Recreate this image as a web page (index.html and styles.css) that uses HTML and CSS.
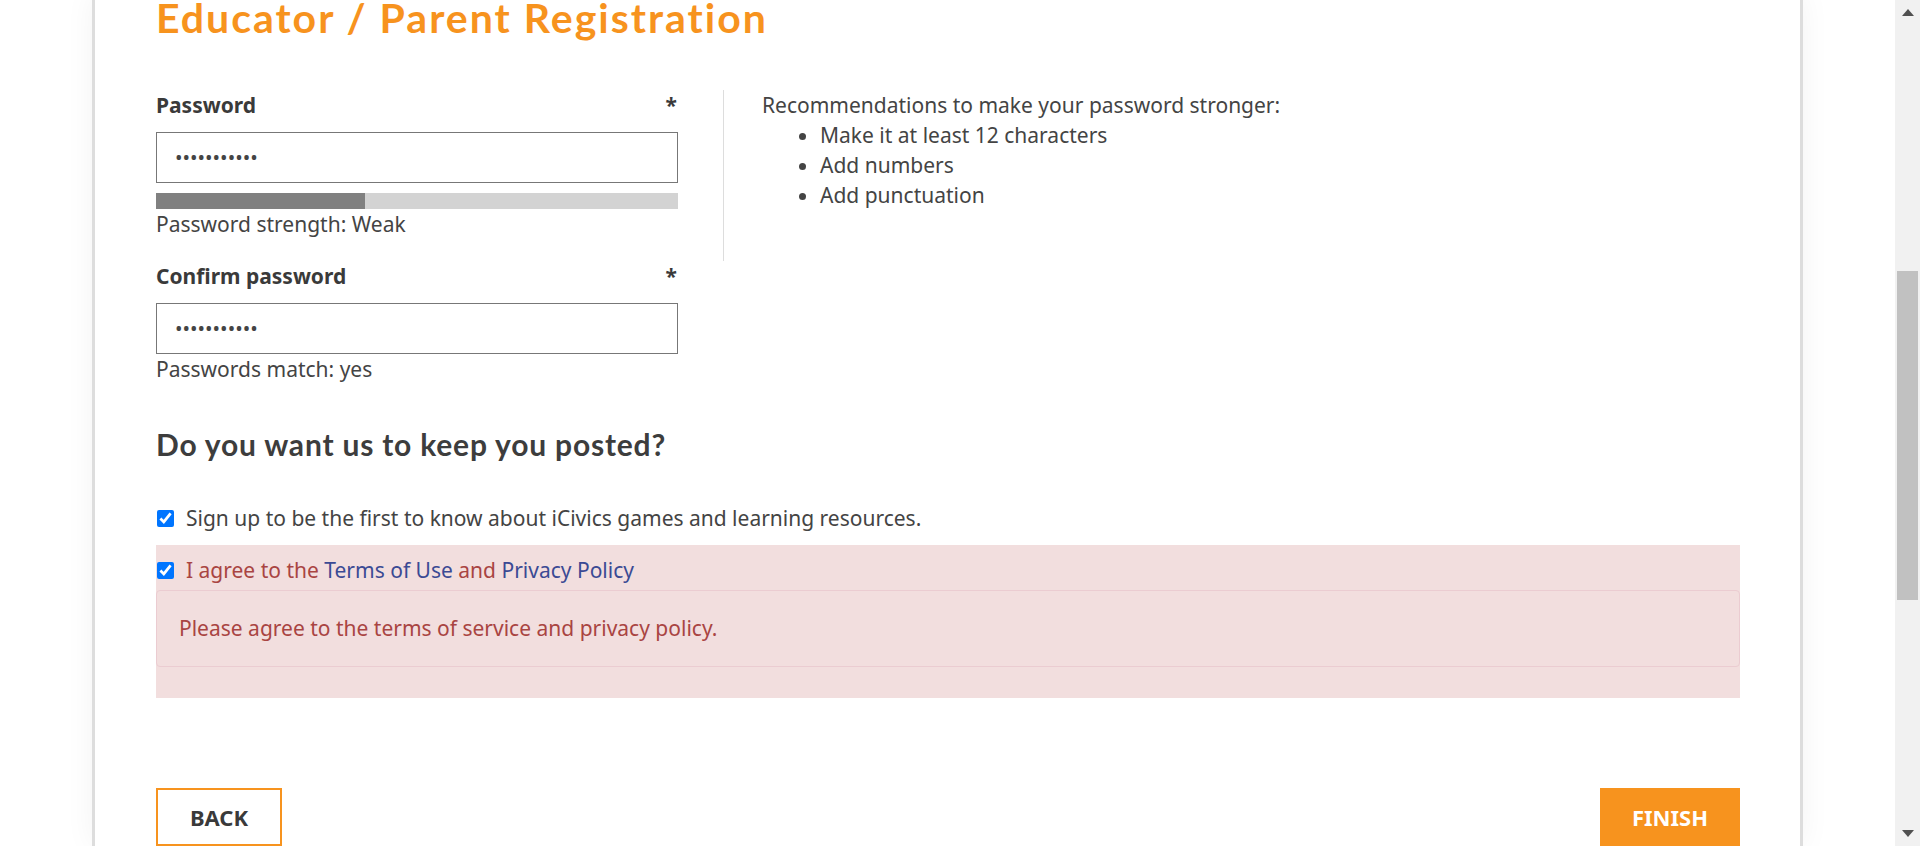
FILE: index.html
```html
<!DOCTYPE html>
<html lang="en">
<head>
<meta charset="utf-8">
<title>Educator / Parent Registration</title>
<link rel="stylesheet" href="styles.css">
</head>
<body>
<div class="viewport">
  <div class="page">
    <main class="card">
      <h1 class="page-title">Educator / Parent Registration</h1>

      <div class="pw-row">
        <div class="pw-col">
          <div class="field-label"><span>Password</span><span class="req">*</span></div>
          <input class="text-input" type="password" value="abcdefghijk" readonly>
          <div class="strength-bar"><div class="strength-fill" style="width:40%"></div></div>
          <div class="help">Password strength: Weak</div>
        </div>
        <div class="pw-tips">
          <div>Recommendations to make your password stronger:</div>
          <ul class="tips-list">
            <li>Make it at least 12 characters</li>
            <li>Add numbers</li>
            <li>Add punctuation</li>
          </ul>
        </div>
      </div>

      <div class="confirm-field">
        <div class="field-label"><span>Confirm password</span><span class="req">*</span></div>
        <input class="text-input" type="password" value="abcdefghijk" readonly>
        <div class="help">Passwords match: yes</div>
      </div>

      <h2 class="section-title">Do you want us to keep you posted?</h2>

      <label class="check-row">
        <input type="checkbox" checked>
        <span>Sign up to be the first to know about iCivics games and learning resources.</span>
      </label>

      <div class="error-item">
        <label class="check-row agree">
          <input type="checkbox" checked>
          <span>I agree to the <a href="#">Terms of Use</a> and <a href="#">Privacy Policy</a></span>
        </label>
        <div class="alert">Please agree to the terms of service and privacy policy.</div>
      </div>

      <div class="actions">
        <button class="btn btn-back" type="button">BACK</button>
        <button class="btn btn-finish" type="button">FINISH</button>
      </div>
    </main>
  </div>
  <div class="scrollbar">
    <div class="sb-arrow">
      <svg width="12" height="7" viewBox="0 0 12 7"><polygon points="6,0 12,7 0,7" fill="#505050"/></svg>
    </div>
    <div class="sb-thumb"></div>
    <div class="sb-arrow sb-down">
      <svg width="12" height="7" viewBox="0 0 12 7"><polygon points="0,0 12,0 6,7" fill="#505050"/></svg>
    </div>
  </div>
</div>
</body>
</html>
```

FILE: styles.css
```css
html, body {
  margin: 0;
  padding: 0;
}

body {
  font-family: "Noto Sans", "Open Sans", sans-serif;
  color: #444;
  background: #fff;
  overflow: hidden;
}

.viewport {
  display: flex;
  height: 846px;
  overflow: hidden;
}

.page {
  flex: 1;
  min-width: 0;
}

.card {
  margin-left: 92px;
  width: 1711px;
  min-height: 846px;
  box-sizing: border-box;
  border-left: 3px solid #ddd;
  border-right: 3px solid #ddd;
  padding: 0 60px 0 61px;
  background: #fff;
  box-shadow: 0 0 28px rgba(0, 0, 0, 0.05);
}

.page-title {
  font-family: "Lato", "Noto Sans", sans-serif;
  font-weight: 700;
  font-size: 41px;
  line-height: 48px;
  letter-spacing: 2px;
  color: #f7931e;
  margin: -6px 0 48px;
}

.pw-row {
  display: flex;
}

.pw-col {
  width: 522px;
  margin-right: 45px;
  padding-bottom: 22px;
}

.field-label {
  display: flex;
  justify-content: space-between;
  font-weight: 700;
  font-size: 21px;
  line-height: 30px;
  color: #3a3a3a;
}

.req {
  margin-right: 1px;
}

.text-input {
  display: block;
  width: 522px;
  height: 51px;
  box-sizing: border-box;
  margin: 12px 0 0;
  border: 1px solid #777;
  border-radius: 0;
  padding: 0 18px;
  font-family: "Noto Sans", sans-serif;
  font-size: 20px;
  color: #444;
  background: #fff;
  outline: none;
}

.strength-bar {
  margin-top: 10px;
  height: 16px;
  background: #d3d3d3;
}

.strength-fill {
  height: 100%;
  background: #808080;
}

.help {
  font-size: 21px;
  line-height: 30px;
}

.confirm-field {
  width: 522px;
}

.pw-tips {
  border-left: 1px solid #ddd;
  padding-left: 38px;
  font-size: 21px;
  line-height: 30px;
}

.tips-list {
  margin: 0;
  padding-left: 58px;
}

.section-title {
  font-family: "Lato", "Noto Sans", sans-serif;
  font-weight: 700;
  font-size: 30px;
  line-height: 36px;
  letter-spacing: 0.8px;
  color: #3d3d3d;
  margin: 42px 0 41px;
}

.check-row {
  display: flex;
  align-items: center;
  gap: 12px;
  font-size: 21px;
  line-height: 30px;
}

.check-row input {
  width: 17px;
  height: 17px;
  margin: 0 0 0 1px;
  flex: none;
}

.error-item {
  background: #f2dede;
  margin-top: 12px;
  padding: 10px 0 31px;
}

.agree {
  color: #a94442;
}

.agree a {
  color: #3b4a94;
  text-decoration: none;
}

.alert {
  margin-top: 5px;
  border: 1px solid #ebccd1;
  border-radius: 4px;
  padding: 22px 22px;
  font-size: 21px;
  line-height: 31px;
  color: #a94442;
}

.actions {
  display: flex;
  justify-content: space-between;
  margin-top: 90px;
}

.btn {
  height: 58px;
  box-sizing: border-box;
  font-family: "Noto Sans", sans-serif;
  font-weight: 700;
  font-size: 22px;
  border-radius: 0;
  padding: 0;
  cursor: pointer;
}

.btn-back {
  width: 126px;
  background: #fff;
  border: 2px solid #f7931e;
  color: #3a3a3a;
}

.btn-finish {
  width: 140px;
  background: #f7931e;
  border: 0;
  color: #fff;
}

.scrollbar {
  width: 25px;
  flex: none;
  background: #f1f1f1;
  display: flex;
  flex-direction: column;
  align-items: center;
}

.sb-arrow {
  height: 25px;
  width: 25px;
  display: flex;
  align-items: center;
  justify-content: center;
  flex: none;
}

.sb-thumb {
  width: 21px;
  height: 329px;
  margin-top: 246px;
  background: #c1c1c1;
}

.sb-down {
  margin-top: auto;
}
```
